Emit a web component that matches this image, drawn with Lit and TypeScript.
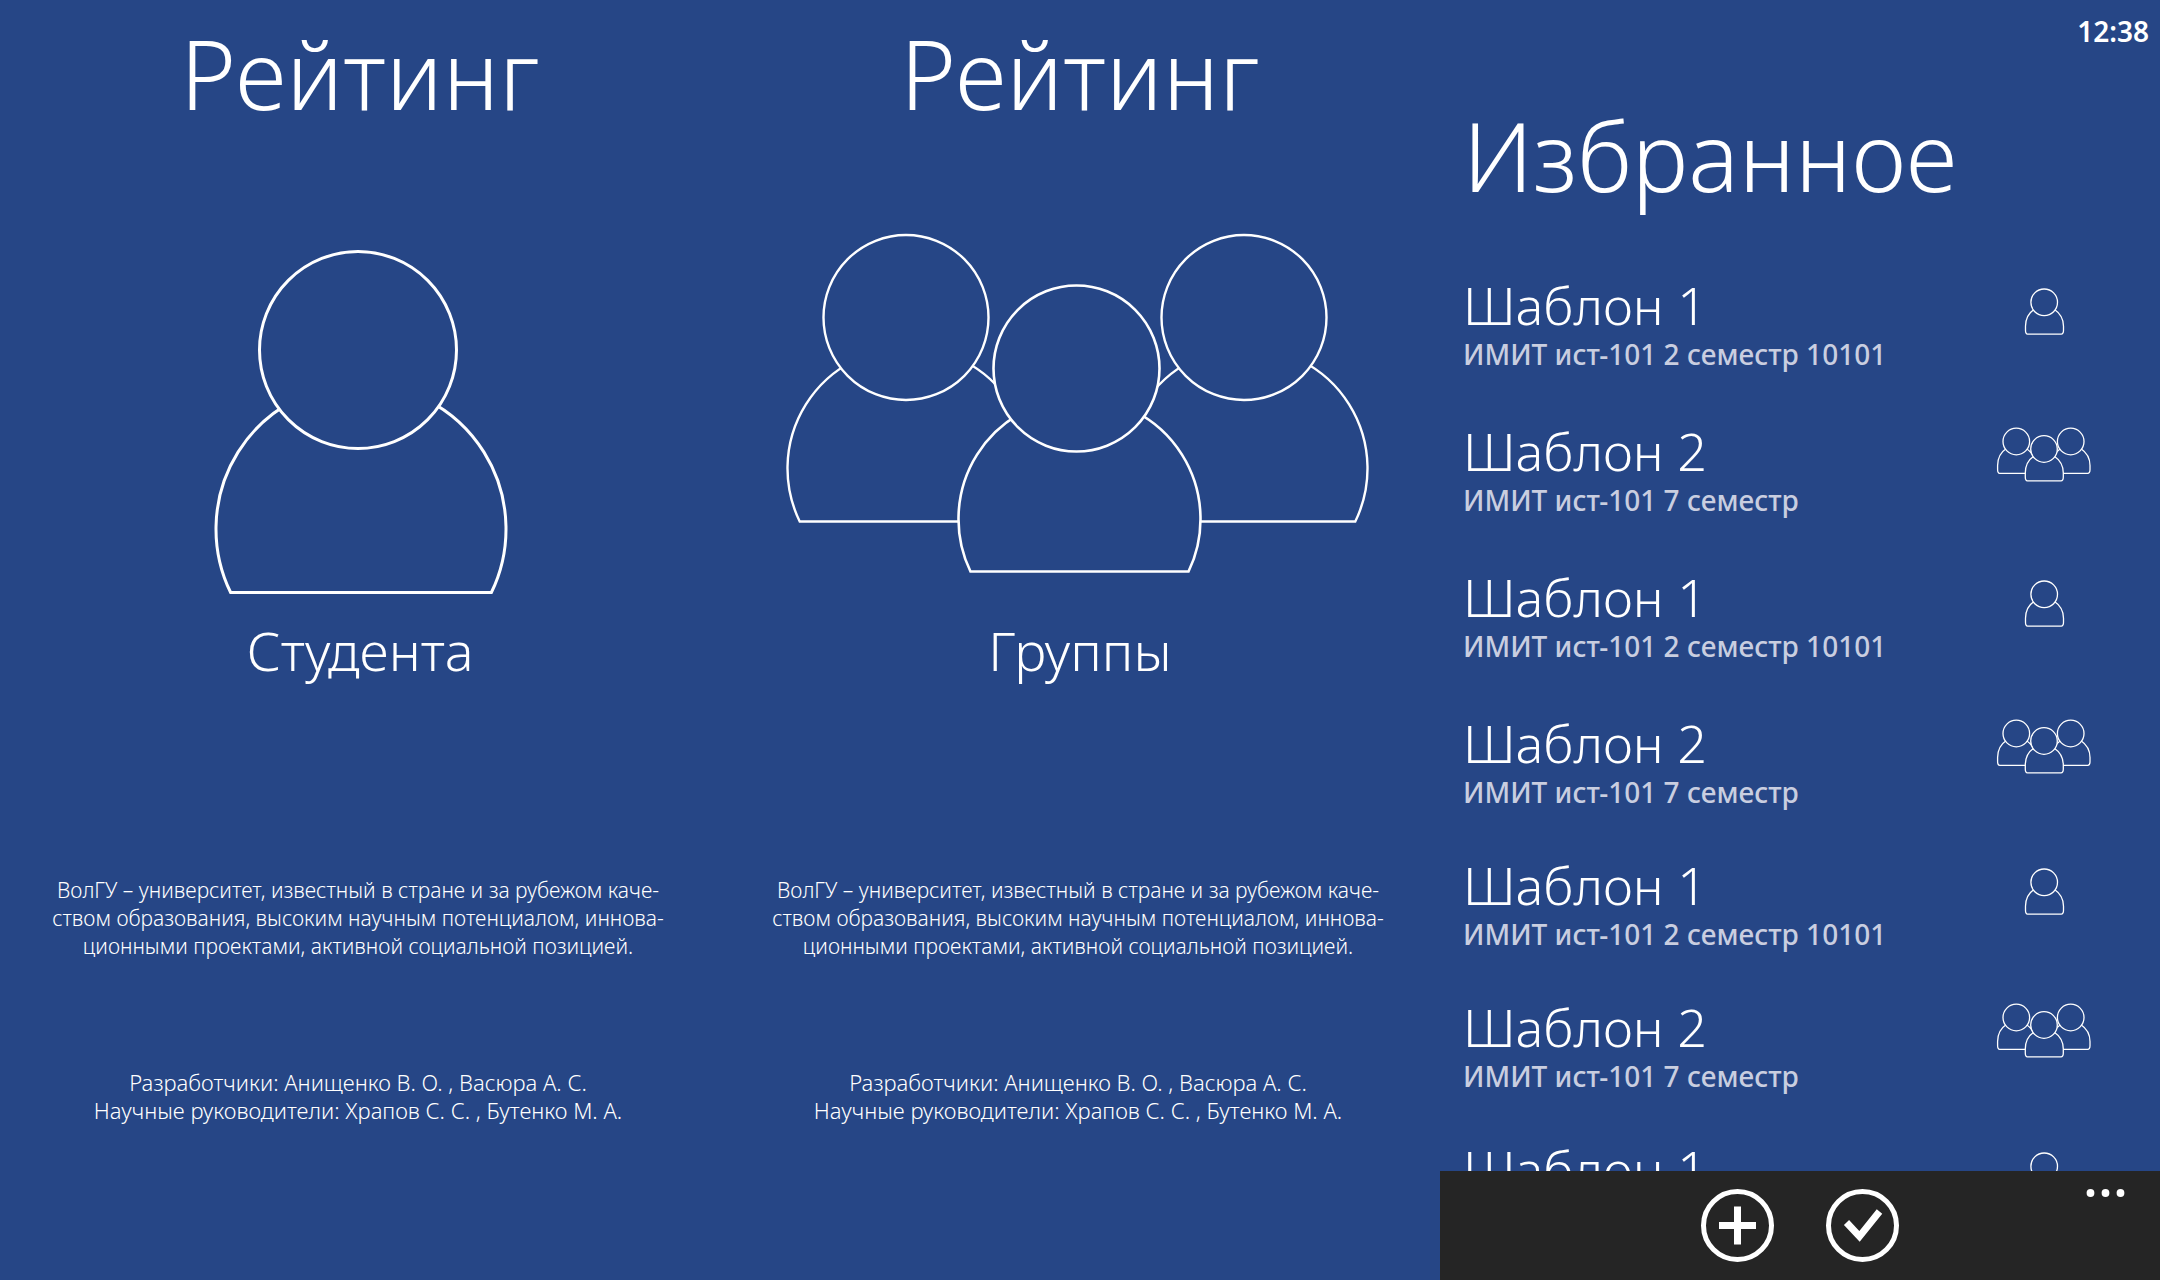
import { LitElement, html, svg, css, nothing } from "lit";
import { customElement, property } from "lit/decorators.js";

type Kind = "student" | "group";

interface Template {
  title: string;
  detail?: string;
  kind: Kind;
}

const templates: Template[] = [
  { title: "Шаблон 1", detail: "ИМИТ ист-101 2 семестр 10101", kind: "student" },
  { title: "Шаблон 2", detail: "ИМИТ ист-101 7 семестр", kind: "group" },
  { title: "Шаблон 1", detail: "ИМИТ ист-101 2 семестр 10101", kind: "student" },
  { title: "Шаблон 2", detail: "ИМИТ ист-101 7 семестр", kind: "group" },
  { title: "Шаблон 1", detail: "ИМИТ ист-101 2 семестр 10101", kind: "student" },
  { title: "Шаблон 2", detail: "ИМИТ ист-101 7 семестр", kind: "group" },
  { title: "Шаблон 1", kind: "student" },
];

/* One figure: the shoulders are an arc closed by a flat base, the head covers their top. */
const figure = (hx: number, hy: number, hr: number, bx: number, by: number, br: number, base: number, sw: number) => {
  const half = Math.sqrt(br * br - (base - by) * (base - by));
  return svg`
    <path class="line" stroke-width=${sw}
      d="M${bx - half} ${base} A${br} ${br} 0 1 1 ${bx + half} ${base} Z"></path>
    <circle class="line" stroke-width=${sw} cx=${hx} cy=${hy} r=${hr}></circle>`;
};

/* The list-sized figure has shoulders that drop straight into small rounded corners. */
const miniFigure = (x: number, y: number) => svg`
  <path class="line" stroke-width="1.3"
    d="M${x - 10} ${y + 7} C${x - 16} ${y + 11} ${x - 18.7} ${y + 17} ${x - 18.7} ${y + 24}
       V${y + 28} Q${x - 18.7} ${y + 31.8} ${x - 16.6} ${y + 31.8} H${x + 17}
       Q${x + 19.3} ${y + 31.8} ${x + 19.3} ${y + 28} V${y + 24}
       C${x + 19.3} ${y + 17} ${x + 16} ${y + 11} ${x + 10} ${y + 7} Z"></path>
  <circle class="line" stroke-width="1.3" cx=${x} cy=${y} r="13.3"></circle>`;

const lineArt = css`
  .line {
    fill: var(--page);
    stroke: #fff;
  }
`;

@customElement("rating-panel")
export class RatingPanel extends LitElement {
  @property() kind: Kind = "student";

  static styles = [
    lineArt,
    css`
      :host {
        display: flex;
        flex-direction: column;
        text-align: center;
        font-weight: 300;
      }
      .title {
        margin: 13px 0 0;
        font-size: 95px;
        line-height: 120px;
        font-weight: 300;
      }
      .tile {
        margin-top: 87px;
        color: inherit;
        text-decoration: none;
      }
      .art {
        display: block;
        width: 100%;
        height: 380px;
      }
      .label {
        display: block;
        margin-top: 14px;
        font-size: 54px;
        line-height: 72px;
      }
      .about,
      .credits {
        padding-right: 4px;
      }
      .about {
        margin: 190px 0 0;
        font-size: 21px;
        line-height: 28px;
      }
      .credits {
        margin: 108px 0 0;
        font-size: 22px;
        line-height: 28px;
      }
    `,
  ];

  render() {
    const student = this.kind === "student";
    return html`
      <h1 class="title">Рейтинг</h1>
      <a class="tile" href="#${this.kind}">
        <svg class="art" viewBox="0 220 720 380" aria-hidden="true">
          ${student
            ? figure(358, 350, 98.5, 361, 529, 145, 592.5, 3)
            : [
                figure(186, 317.5, 82.5, 188.5, 468.5, 121, 521.5, 2.4),
                figure(524, 317.5, 82.5, 526.5, 468.5, 121, 521.5, 2.4),
                figure(356.5, 368.5, 83, 359.5, 519, 121, 571.5, 2.6),
              ]}
        </svg>
        <span class="label">${student ? "Студента" : "Группы"}</span>
      </a>
      <p class="about">
        ВолГУ – университет, известный в стране и за рубежом каче-<br />
        ством образования, высоким научным потенциалом, иннова-<br />
        ционными проектами, активной социальной позицией.
      </p>
      <p class="credits">
        Разработчики: Анищенко В. О. , Васюра А. С.<br />
        Научные руководители: Храпов С. С. , Бутенко М. А.
      </p>
    `;
  }
}

@customElement("favorites-panel")
export class FavoritesPanel extends LitElement {
  static styles = [
    lineArt,
    css`
      :host {
        display: flex;
        flex-direction: column;
        min-height: 0;
      }
      .time {
        padding: 11px 11px 0;
        text-align: right;
        font-size: 28px;
        line-height: 40px;
        font-weight: 600;
      }
      .title {
        margin: 44px 0 0;
        padding-left: 23px;
        font-size: 95px;
        line-height: 120px;
        font-weight: 300;
      }
      .list {
        flex: 1;
        min-height: 0;
        overflow: hidden;
        margin: 60px 0 0;
        padding: 0;
        list-style: none;
      }
      .item {
        height: 146px;
      }
      .item:nth-child(n + 4) {
        height: 142px;
      }
      .link {
        display: flex;
        justify-content: space-between;
        align-items: flex-start;
        padding: 0 68px 0 23px;
        color: inherit;
        text-decoration: none;
      }
      .name {
        display: block;
        font-size: 52px;
        line-height: 60px;
        font-weight: 300;
      }
      .detail {
        display: block;
        font-size: 28px;
        line-height: 38px;
        font-weight: 500;
        color: #c9cee0;
      }
      .icon {
        width: 96px;
        height: 60px;
        padding-top: 5px;
      }
      .bar {
        display: grid;
        grid-template-columns: 1fr auto 1fr;
        align-items: start;
        padding: 18px 35px 18px;
        background: #252525;
      }
      .actions {
        grid-column: 2;
        display: flex;
        gap: 52px;
      }
      .button {
        display: block;
        padding: 0;
        border: 0;
        background: none;
        cursor: pointer;
      }
      .button svg {
        display: block;
      }
      .more {
        justify-self: end;
      }
      .ring,
      .mark {
        fill: none;
        stroke: #fff;
      }
      .ring {
        stroke-width: 5;
      }
      .mark {
        stroke-width: 7;
      }
      .dot {
        fill: #fff;
      }
    `,
  ];

  private icon(kind: Kind) {
    return html`<svg class="icon" viewBox="0 0 96 60" aria-hidden="true">
      ${kind === "student"
        ? miniFigure(48.2, 22.3)
        : [miniFigure(20.3, 15.5), miniFigure(74.7, 15.5), miniFigure(48, 23)]}
    </svg>`;
  }

  render() {
    return html`
      <time class="time">12:38</time>
      <h1 class="title">Избранное</h1>
      <ul class="list">
        ${templates.map(
          (t) => html`<li class="item">
            <a class="link" href="#template">
              <span>
                <span class="name">${t.title}</span>
                ${t.detail ? html`<span class="detail">${t.detail}</span>` : nothing}
              </span>
              ${this.icon(t.kind)}
            </a>
          </li>`,
        )}
      </ul>
      <footer class="bar">
        <div class="actions">
          <button class="button" aria-label="Добавить">
            <svg width="73" height="73" viewBox="0 0 73 73">
              <circle class="ring" cx="36.5" cy="36.5" r="34"></circle>
              <path class="mark" d="M18 36.5H55M36.5 17.5V55.5"></path>
            </svg>
          </button>
          <button class="button" aria-label="Выбрать">
            <svg width="73" height="73" viewBox="0 0 73 73">
              <circle class="ring" cx="36.5" cy="36.5" r="34"></circle>
              <path class="mark" d="M20.5 33.5L33.5 47.5L53.5 22.5"></path>
            </svg>
          </button>
        </div>
        <button class="button more" aria-label="Ещё">
          <svg width="40" height="16" viewBox="0 0 40 16">
            <circle class="dot" cx="5.5" cy="4" r="3.9"></circle>
            <circle class="dot" cx="20.5" cy="4" r="3.9"></circle>
            <circle class="dot" cx="35.5" cy="4" r="3.9"></circle>
          </svg>
        </button>
      </footer>
    `;
  }
}

@customElement("app-root")
export class AppRoot extends LitElement {
  static styles = css`
    :host {
      --page: #264686;
      display: grid;
      grid-template-columns: repeat(3, minmax(0, 1fr));
      grid-template-rows: minmax(0, 1fr);
      height: 100vh;
      overflow: hidden;
      background: var(--page);
      color: #fff;
      font-family: "Noto Sans", "Open Sans", sans-serif;
    }
  `;

  render() {
    return html`
      <rating-panel kind="student"></rating-panel>
      <rating-panel kind="group"></rating-panel>
      <favorites-panel></favorites-panel>
    `;
  }
}
